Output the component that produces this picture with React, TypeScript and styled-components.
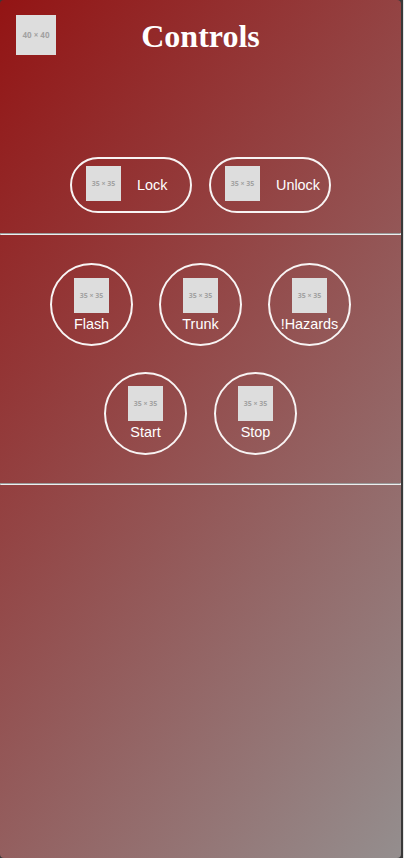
import React from "react";
import styled, { createGlobalStyle } from "styled-components";

const GlobalStyle = createGlobalStyle`
  * { box-sizing: border-box; }
  body { margin: 0; background: #e4e4e4; overflow: hidden; }
`;

const Bezel = styled.div`
  width: 403px;
  height: 858px;
  padding-right: 2px;
  background: #383838;
`;

const Screen = styled.main`
  display: flex;
  flex-direction: column;
  width: 401px;
  height: 858px;
  border-radius: 4px;
  background: linear-gradient(127deg, #931414 0%, #948e8e 100%);
  color: #fff;
`;

const Header = styled.header`
  display: grid;
  grid-template-columns: 40px 1fr 40px;
  height: 157px;
  padding: 15px 16px 0;
`;

const Title = styled.h1`
  margin: 3px 0 0;
  text-align: center;
  font: bold 32px/37px "Liberation Serif", serif;
`;

const Placeholder = styled.span<{ $size: number }>`
  display: flex;
  flex: none;
  align-items: center;
  justify-content: center;
  width: ${(p) => p.$size}px;
  height: ${(p) => p.$size}px;
  background: #ddd;
  color: #a2a2a2;
  font: bold ${(p) => (p.$size === 40 ? 8 : 7)}px/1 "Noto Sans", sans-serif;
  white-space: pre;
`;

const LockRow = styled.section`
  display: flex;
  gap: 17px;
  height: 76px;
  padding-left: 70px;
`;

const ControlButton = styled.button`
  display: flex;
  border: 2px solid #f8f4f4;
  background: transparent;
  color: #fff;
  font: 14.4px/16px "Liberation Sans", sans-serif;
  white-space: nowrap;
`;

const PillButton = styled(ControlButton)`
  gap: 16px;
  width: 122px;
  height: 56px;
  padding: 7px 0 0 14px;
  border-radius: 28px;
  line-height: 38px;
`;

const RoundButton = styled(ControlButton)<{ $top: number }>`
  flex-direction: column;
  align-items: center;
  gap: 3px;
  width: 83px;
  height: 83px;
  padding: ${(p) => p.$top}px 0 0;
  border-radius: 50%;
`;

const Divider = styled.hr`
  flex: none;
  width: 100%;
  height: 2px;
  margin: 0;
  border: 1px solid;
  border-color: #9a9a9a #eee #eee #9a9a9a;
`;

const Actions = styled.section`
  display: flex;
  flex-direction: column;
  gap: 26px;
  height: 248px;
  padding-top: 28px;
`;

const ActionRow = styled.div<{ $gap: number; $start: number }>`
  display: flex;
  gap: ${(p) => p.$gap}px;
  padding-left: ${(p) => p.$start}px;
`;

const Image = ({ size }: { size: number }) => (
  <Placeholder $size={size}>{`${size} × ${size}`}</Placeholder>
);

export default function App() {
  return (
    <>
      <GlobalStyle />
      <Bezel>
        <Screen>
          <Header>
            <Image size={40} />
            <Title>Controls</Title>
          </Header>
          <LockRow>
            {["Lock", "Unlock"].map((label) => (
              <PillButton key={label}>
                <Image size={35} />
                {label}
              </PillButton>
            ))}
          </LockRow>
          <Divider />
          <Actions>
            <ActionRow $gap={26} $start={50}>
              {["Flash", "Trunk", "!Hazards"].map((label) => (
                <RoundButton key={label} $top={13}>
                  <Image size={35} />
                  {label}
                </RoundButton>
              ))}
            </ActionRow>
            <ActionRow $gap={27} $start={104}>
              {["Start", "Stop"].map((label) => (
                <RoundButton key={label} $top={12}>
                  <Image size={35} />
                  {label}
                </RoundButton>
              ))}
            </ActionRow>
          </Actions>
          <Divider />
        </Screen>
      </Bezel>
    </>
  );
}
